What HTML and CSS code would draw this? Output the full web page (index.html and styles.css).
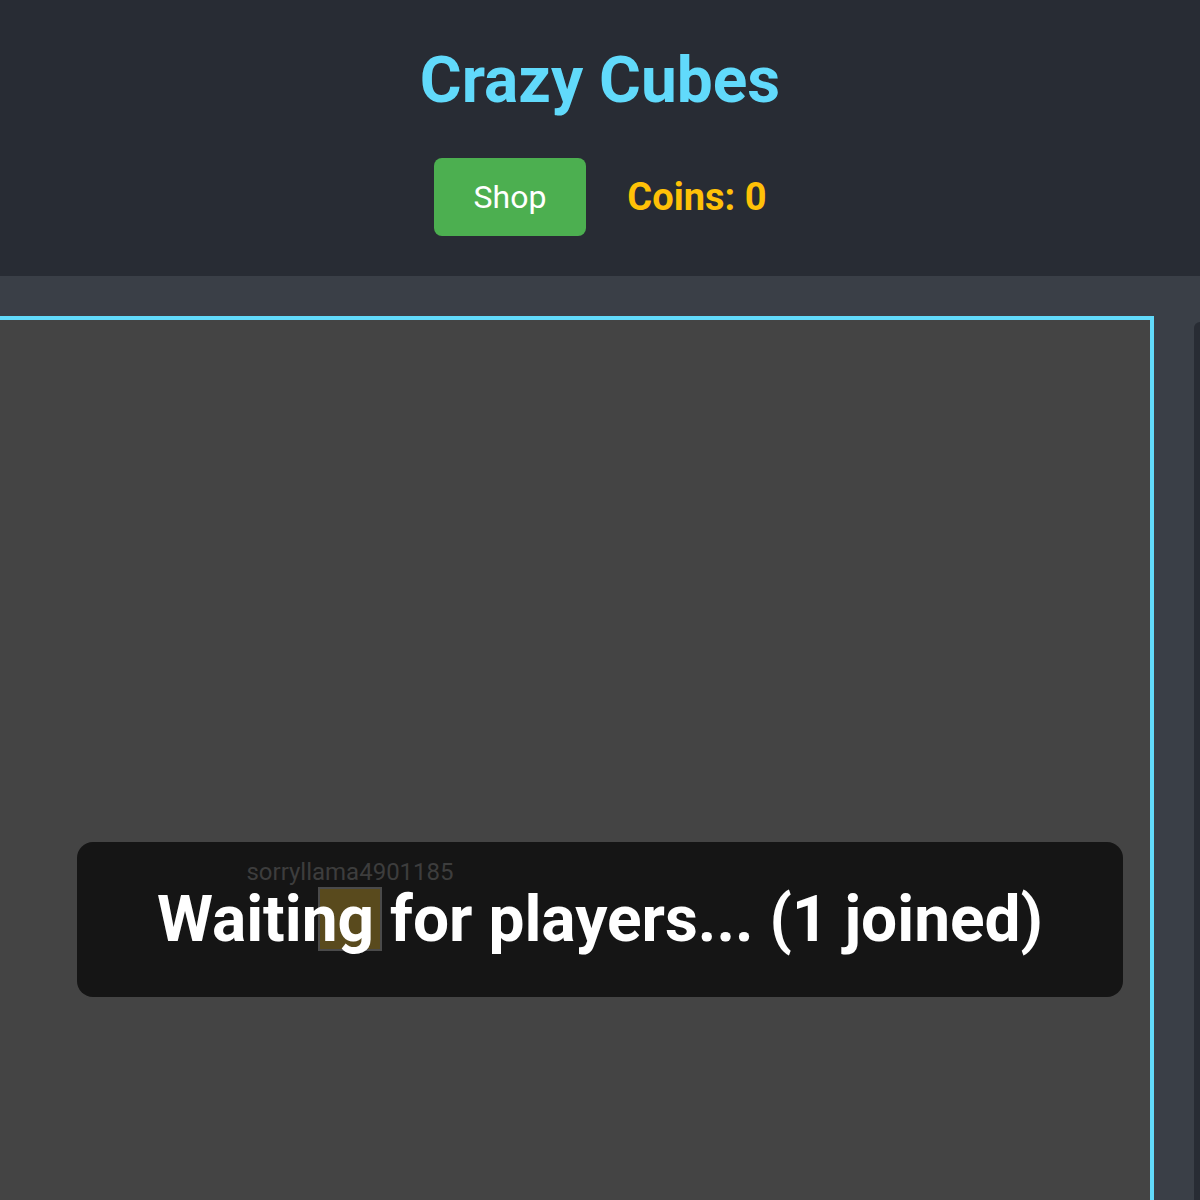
FILE: index.html
```html
<!DOCTYPE html>
<html lang="en">
<head>
    <meta charset="UTF-8">
    <meta name="viewport" content="width=device-width, initial-scale=1.0">
    <title>Crazy Cubes</title>
    <link rel="stylesheet" href="styles.css">
</head>
<body>

<header class="header">
    <h1 class="title">Crazy Cubes</h1>
    <div class="toolbar">
        <button type="button" class="shop-btn">Shop</button>
        <span class="coins">Coins: 0</span>
    </div>
</header>

<main class="main">
    <div class="game">
        <!-- waiting overlay -->
        <div class="overlay">
            <span class="overlay-text">Waiting for players... (1 joined)</span>
        </div>

        <!-- player drawn on the board -->
        <div class="player" style="left: 240px; top: 538px;">
            <span class="player-name">sorryllama4901185</span>
            <div class="cube"></div>
        </div>
    </div>

    <aside class="sidebar"></aside>
</main>

</body>
</html>
```

FILE: styles.css
```css
body {
    font-family: Roboto, 'Liberation Sans', Arial, sans-serif;
    background-color: #3a3f47;
    margin: 0;
    padding: 0;
    height: 1200px;
    overflow: hidden;
}

.header {
    background-color: #282c34;
    padding: 43px 0 40px 0;
    text-align: center;
}

.title {
    margin: 0;
    font-size: 64px;
    line-height: 75px;
    font-weight: 700;
    color: #61dafb;
}

.toolbar {
    display: flex;
    justify-content: center;
    align-items: center;
    gap: 41px;
    margin-top: 40px;
}

.shop-btn {
    font-family: inherit;
    font-size: 32px;
    line-height: 42px;
    padding: 18px 40px;
    background-color: #4caf50;
    color: #ffffff;
    border: none;
    border-radius: 8px;
    cursor: pointer;
}

.coins {
    font-size: 38px;
    font-weight: 700;
    color: #ffc107;
}

.main {
    display: flex;
    align-items: flex-start;
    gap: 40px;
    padding-top: 40px;
}

.game {
    position: relative;
    flex: none;
    width: 1150px;
    height: 1000px;
    background-color: #444444;
    border: 4px solid #61dafb;
    border-left: none;
}

.overlay {
    position: absolute;
    left: 77px;
    top: 522px;
    width: 1046px;
    height: 155px;
    background-color: #151515;
    border-radius: 16px;
    display: flex;
    justify-content: center;
    align-items: center;
}

.overlay-text {
    position: relative;
    z-index: 3;
    font-size: 64px;
    font-weight: 700;
    color: #ffffff;
}

.player {
    position: absolute;
    z-index: 2;
    width: 220px;
    display: flex;
    flex-direction: column;
    align-items: center;
}

.player-name {
    font-size: 24px;
    line-height: 28px;
    color: #3d3d3d;
    white-space: nowrap;
}

.cube {
    width: 60px;
    height: 60px;
    margin-top: 1px;
    background-color: #594a1d;
    border: 2px solid #4a4a4a;
}

.sidebar {
    flex: 1;
    height: 1000px;
    margin-top: 6px;
    background-color: #282c34;
    border-top-left-radius: 8px;
}
```
